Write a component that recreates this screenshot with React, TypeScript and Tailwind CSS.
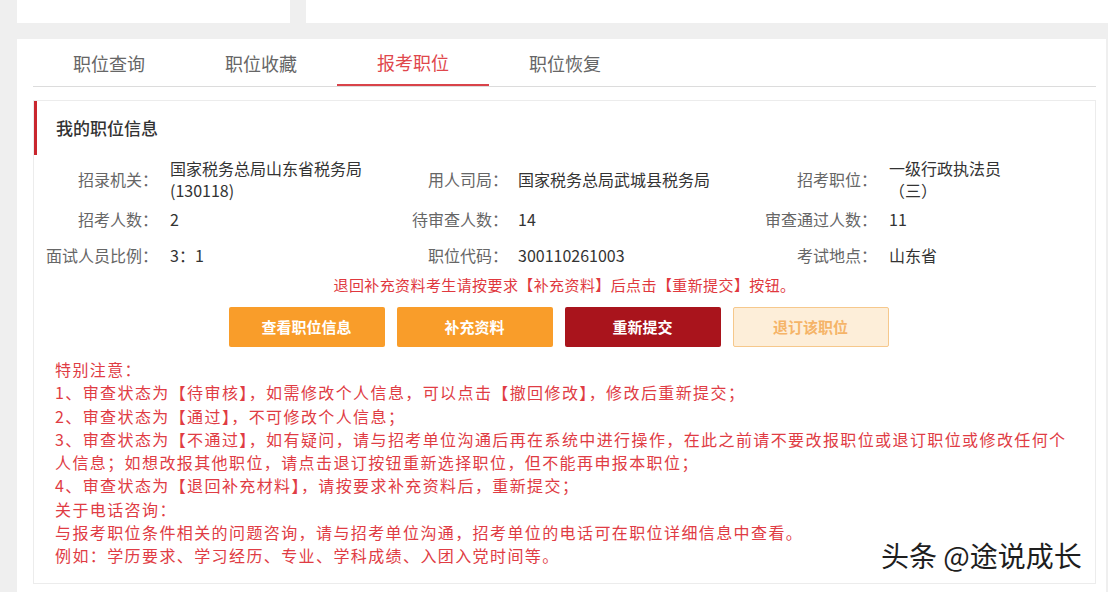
import * as React from 'react';

const TABS = ['职位查询', '职位收藏', '报考职位', '职位恢复'];

const NOTES = [
  '特别注意：',
  '1、审查状态为【待审核】，如需修改个人信息，可以点击【撤回修改】，修改后重新提交；',
  '2、审查状态为【通过】，不可修改个人信息；',
  '3、审查状态为【不通过】，如有疑问，请与招考单位沟通后再在系统中进行操作，在此之前请不要改报职位或退订职位或修改任何个',
  '人信息；如想改报其他职位，请点击退订按钮重新选择职位，但不能再申报本职位；',
  '4、审查状态为【退回补充材料】，请按要求补充资料后，重新提交；',
  '关于电话咨询：',
  '与报考职位条件相关的问题咨询，请与招考单位沟通，招考单位的电话可在职位详细信息中查看。',
  '例如：学历要求、学习经历、专业、学科成绩、入团入党时间等。',
];

function Label({ children }: { children: React.ReactNode }) {
  return <div className="text-right text-[16px] leading-[22px] text-[#666]">{children}</div>;
}

function Value({ children }: { children: React.ReactNode }) {
  return <div className="text-[16px] leading-[22px] text-[#333]">{children}</div>;
}

export default function App() {
  return (
    <div
      className="relative h-[592px] w-[1108px] overflow-hidden bg-[#efefef]"
      style={{ fontFamily: '"Noto Sans CJK SC", "Noto Sans", sans-serif' }}
    >
      {/* top boxes */}
      <div className="flex h-[23px] pl-[17px]">
        <div className="w-[273px] bg-white" />
        <div className="ml-[16px] flex-1 bg-white" />
      </div>

      {/* main card */}
      <div className="ml-[17px] mr-[2px] mt-[16px] h-[560px] bg-white pl-[16px] pr-[10px]">
        {/* tabs */}
        <div className="flex h-[48px] border-b border-[#dcdcdc]">
          {TABS.map((tab, i) => (
            <div
              key={tab}
              className={
                i === 2
                  ? 'flex w-[152px] items-center justify-center border-b-2 border-[#d9434a] pt-[2px] text-[18px] text-[#e0474c]'
                  : 'flex w-[152px] items-center justify-center pt-[2px] text-[18px] text-[#666]'
              }
            >
              {tab}
            </div>
          ))}
        </div>

        {/* info box */}
        <div className="mt-[13px] h-[484px] border border-[#ececec]">
          <div className="flex h-[54px] items-center border-l-[3px] border-[#c9262e] pl-[19px] text-[17px] font-medium text-[#333]">
            我的职位信息
          </div>

          <div className="grid grid-cols-[136px_230px_118px_242px_129px_121px] grid-rows-[48px_32px_40px] items-center">
            <div className="pr-[12px]"><Label>招录机关：</Label></div>
            <Value>国家税务总局山东省税务局(130118)</Value>
            <div className="pr-[10px]"><Label>用人司局：</Label></div>
            <Value>国家税务总局武城县税务局</Value>
            <div className="pr-[12px]"><Label>招考职位：</Label></div>
            <Value>一级行政执法员（三）</Value>

            <div className="pr-[12px]"><Label>招考人数：</Label></div>
            <Value>2</Value>
            <div className="pr-[10px]"><Label>待审查人数：</Label></div>
            <Value>14</Value>
            <div className="pr-[12px]"><Label>审查通过人数：</Label></div>
            <Value>11</Value>

            <div className="pr-[12px]"><Label>面试人员比例：</Label></div>
            <Value>3：1</Value>
            <div className="pr-[10px]"><Label>职位代码：</Label></div>
            <Value>300110261003</Value>
            <div className="pr-[12px]"><Label>考试地点：</Label></div>
            <Value>山东省</Value>
          </div>

          <div className="h-[20px] text-center text-[15px] leading-[20px] tracking-[0.4px] text-[#e0383e]">
            退回补充资料考生请按要求【补充资料】后点击【重新提交】按钮。
          </div>

          <div className="mt-[12px] flex justify-center gap-[12px] pr-[12px]">
            <button className="h-[40px] w-[156px] rounded-[2px] bg-[#f99d2a] text-[15px] font-bold text-white">
              查看职位信息
            </button>
            <button className="h-[40px] w-[156px] rounded-[2px] bg-[#f99d2a] text-[15px] font-bold text-white">
              补充资料
            </button>
            <button className="h-[40px] w-[156px] rounded-[2px] bg-[#a9141c] text-[15px] font-bold text-white">
              重新提交
            </button>
            <button className="h-[40px] w-[156px] rounded-[2px] border border-[#f6c88c] bg-[#fdeed9] text-[15px] font-bold text-[#f5b468]">
              退订该职位
            </button>
          </div>

          <div className="mt-[11px] pl-[21px] text-[16px] leading-[23.25px] tracking-[1.4px] text-[#e03c44]">
            {NOTES.map((line, i) => (
              <div key={i} className="whitespace-nowrap">
                {line}
              </div>
            ))}
          </div>
        </div>
      </div>

      {/* watermark */}
      <div
        className="absolute left-[881px] top-[537px] whitespace-nowrap text-[28px] leading-[36px] text-[#1e1e1e]"
        style={{ textShadow: '0 0 2px #fff, 0 0 2px #fff' }}
      >
        头条 @途说成长
      </div>
    </div>
  );
}
